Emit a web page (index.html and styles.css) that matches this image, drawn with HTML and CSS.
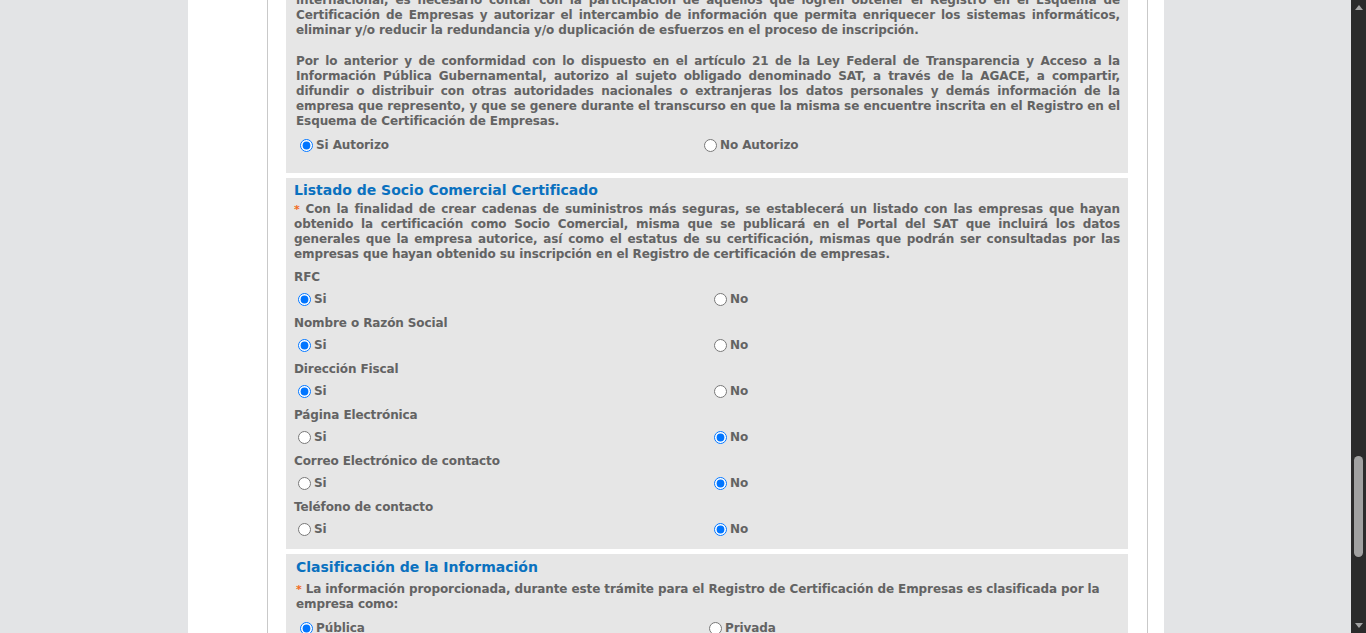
FILE: index.html
```html
<!DOCTYPE html>
<html lang="es">
<head>
<meta charset="utf-8">
<title>Registro en el Esquema de Certificación de Empresas</title>
<link rel="stylesheet" href="styles.css">
</head>
<body>
<div class="page">
  <div class="viewport">
    <div class="shell">
      <div class="side"></div>
      <div class="content">
        <div class="scrolled">
          <section class="panel panel-auth">
            <p class="text">
              <span class="jl">internacional, es necesario contar con la participación de aquellos que logren obtener el Registro en el Esquema de</span>
              <span class="jl">Certificación de Empresas y autorizar el intercambio de información que permita enriquecer los sistemas informáticos,</span>
              <span class="ll">eliminar y/o reducir la redundancia y/o duplicación de esfuerzos en el proceso de inscripción.</span>
            </p>
            <p class="text gap">
              <span class="jl">Por lo anterior y de conformidad con lo dispuesto en el artículo 21 de la Ley Federal de Transparencia y Acceso a la</span>
              <span class="jl">Información Pública Gubernamental, autorizo al sujeto obligado denominado SAT, a través de la AGACE, a compartir,</span>
              <span class="jl">difundir o distribuir con otras autoridades nacionales o extranjeras los datos personales y demás información de la</span>
              <span class="jl">empresa que represento, y que se genere durante el transcurso en que la misma se encuentre inscrita en el Registro en el</span>
              <span class="ll">Esquema de Certificación de Empresas.</span>
            </p>
            <div class="choices choices-auth">
              <label class="opt"><input type="radio" name="aut" checked>Si Autorizo</label>
              <label class="opt"><input type="radio" name="aut">No Autorizo</label>
            </div>
          </section>

          <section class="panel panel-list">
            <h2 class="title">Listado de Socio Comercial Certificado</h2>
            <p class="text">
              <span class="jl"><span class="req">*</span> Con la finalidad de crear cadenas de suministros más seguras, se establecerá un listado con las empresas que hayan</span>
              <span class="jl">obtenido la certificación como Socio Comercial, misma que se publicará en el Portal del SAT que incluirá los datos</span>
              <span class="jl">generales que la empresa autorice, así como el estatus de su certificación, mismas que podrán ser consultadas por las</span>
              <span class="ll">empresas que hayan obtenido su inscripción en el Registro de certificación de empresas.</span>
            </p>
            <div class="field">
              <div class="field-label">RFC</div>
              <div class="choices choices-list">
                <label class="opt"><input type="radio" name="rfc" checked>Si</label>
                <label class="opt"><input type="radio" name="rfc">No</label>
              </div>
            </div>
            <div class="field">
              <div class="field-label">Nombre o Razón Social</div>
              <div class="choices choices-list">
                <label class="opt"><input type="radio" name="nom" checked>Si</label>
                <label class="opt"><input type="radio" name="nom">No</label>
              </div>
            </div>
            <div class="field">
              <div class="field-label">Dirección Fiscal</div>
              <div class="choices choices-list">
                <label class="opt"><input type="radio" name="dir" checked>Si</label>
                <label class="opt"><input type="radio" name="dir">No</label>
              </div>
            </div>
            <div class="field">
              <div class="field-label">Página Electrónica</div>
              <div class="choices choices-list">
                <label class="opt"><input type="radio" name="pag">Si</label>
                <label class="opt"><input type="radio" name="pag" checked>No</label>
              </div>
            </div>
            <div class="field">
              <div class="field-label">Correo Electrónico de contacto</div>
              <div class="choices choices-list">
                <label class="opt"><input type="radio" name="cor">Si</label>
                <label class="opt"><input type="radio" name="cor" checked>No</label>
              </div>
            </div>
            <div class="field">
              <div class="field-label">Teléfono de contacto</div>
              <div class="choices choices-list">
                <label class="opt"><input type="radio" name="tel">Si</label>
                <label class="opt"><input type="radio" name="tel" checked>No</label>
              </div>
            </div>
          </section>

          <section class="panel panel-class">
            <h2 class="title title-class">Clasificación de la Información</h2>
            <p class="text left">
              <span class="req">*</span> La información proporcionada, durante este trámite para el Registro de Certificación de Empresas es clasificada por la<br>empresa como:
            </p>
            <div class="choices choices-class">
              <label class="opt"><input type="radio" name="cla" checked>Pública</label>
              <label class="opt"><input type="radio" name="cla">Privada</label>
            </div>
          </section>
        </div>
      </div>
    </div>
  </div>
  <div class="scrollbar">
    <div class="arrow up"></div>
    <div class="track"><div class="thumb"></div></div>
    <div class="arrow down"></div>
  </div>
</div>
</body>
</html>
```

FILE: styles.css
```css
* { box-sizing: border-box; }

html, body {
  margin: 0;
  padding: 0;
  height: 633px;
  overflow: hidden;
  background: #e3e4e6;
}

body {
  font-family: "DejaVu Sans", Verdana, sans-serif;
  font-size: 12px;
  font-weight: bold;
  letter-spacing: -0.1px;
  color: #636363;
}

.page {
  display: flex;
  height: 633px;
}

.viewport {
  flex: 1;
  height: 633px;
  overflow: hidden;
  background: #e3e4e6;
}

.shell {
  margin-left: 188px;
  width: 976px;
  height: 633px;
  background: #ffffff;
  display: flex;
}

.side {
  width: 79px;
  flex: none;
}

.content {
  width: 881px;
  flex: none;
  border-left: 1px solid #c9c9c9;
  border-right: 1px solid #c9c9c9;
  padding: 0 19px 0 18px;
  overflow: hidden;
}

.scrolled {
  margin-top: -12px;
}

.panel {
  background: #e6e6e6;
  margin-bottom: 5px;
}

.panel-auth {
  padding: 5px 8px 20px 10px;
}

.panel-list {
  padding: 2px 8px 12px 8px;
}

.panel-class {
  padding: 3px 8px 10px 10px;
}

.text {
  margin: 0;
  line-height: 15px;
  text-align: justify;
}

.text.gap {
  margin-top: 16px;
}

.text.left {
  text-align: left;
}

.jl {
  display: block;
  white-space: nowrap;
  text-align: justify;
  text-align-last: justify;
}

.ll {
  display: block;
  text-align: left;
}

.req {
  color: #f26a21;
  font-size: 11px;
}

.title {
  margin: 0 0 2px 0;
  font-size: 14px;
  line-height: 20px;
  letter-spacing: 0;
  color: #0a71bf;
  font-weight: bold;
}

.title-class {
  margin-bottom: 5px;
}

.choices {
  display: grid;
  line-height: 16px;
}

.choices-auth {
  grid-template-columns: 404px 1fr;
  margin-top: 8px;
  margin-left: -1px;
}

.choices-list {
  grid-template-columns: 416px 1fr;
  margin-left: -1px;
}

.choices-class {
  grid-template-columns: 409px 1fr;
  margin-top: 8px;
  margin-left: -1px;
}

.opt {
  display: flex;
  align-items: center;
}

.opt input {
  margin: 0 3px 0 5px;
  width: 13px;
  height: 13px;
}

.field {
  margin-top: 9px;
}

.field:first-of-type {
  margin-top: 8px;
}

.field-label {
  line-height: 15px;
  margin-bottom: 6px;
}

.scrollbar {
  width: 15px;
  flex: none;
  height: 633px;
  background: #2b2b2b;
  display: flex;
  flex-direction: column;
  align-items: center;
}

.arrow {
  width: 0;
  height: 0;
  border-left: 4px solid transparent;
  border-right: 4px solid transparent;
}

.arrow.up {
  margin-top: 5px;
  border-bottom: 5px solid #a3a3a3;
}

.arrow.down {
  margin-bottom: 5px;
  border-top: 5px solid #a3a3a3;
}

.track {
  flex: 1;
  width: 100%;
  display: flex;
  justify-content: center;
}

.thumb {
  width: 9px;
  height: 101px;
  margin-top: 446px;
  background: #a1a1a1;
  border-radius: 5px;
}
```
